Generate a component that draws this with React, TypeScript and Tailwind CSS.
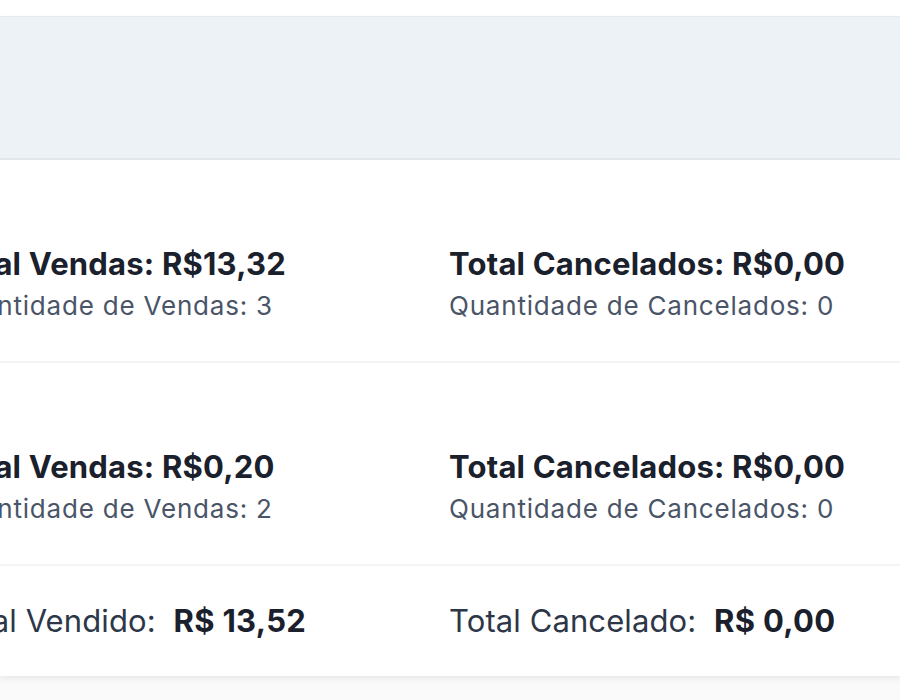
import React from "react";

interface SummaryRow {
    vendas: string;
    qtdVendas: number;
    cancelados: string;
    qtdCancelados: number;
}

const rows: SummaryRow[] = [
    { vendas: "R$13,32", qtdVendas: 3, cancelados: "R$0,00", qtdCancelados: 0 },
    { vendas: "R$0,20", qtdVendas: 2, cancelados: "R$0,00", qtdCancelados: 0 },
];

export default function App() {
    return (
        <div
            className="w-[900px] h-[700px] overflow-hidden bg-[#fafafa] text-[#1a202c]"
            style={{ fontFamily: "Inter, 'Noto Sans', sans-serif" }}
        >
            <div className="h-[16px] bg-white" />
            <div className="bg-white shadow-[0_3px_6px_rgba(0,0,0,0.08)]">
                {/* header band */}
                <div className="h-[144px] bg-[#edf2f7] border-t border-[#e6ebf1] border-b-2 border-b-[#e3e7ec]" />

                {/* period rows */}
                {rows.map((r, i) => (
                    <div key={i} className="h-[203px] pt-[46px] border-b-2 border-[#f3f4f6] flex items-center overflow-hidden">
                        <div className="ml-[-55px] grid grid-cols-[504px_500px] whitespace-nowrap shrink-0">
                            <div>
                                <div className="text-[31px] leading-[38px] font-bold tracking-[0.2px] text-[#1a202c]">Total Vendas: {r.vendas}</div>
                                <div className="text-[26px] leading-[32px] tracking-[0.8px] text-[#4a5568] mt-[7px]">Quantidade de Vendas: {r.qtdVendas}</div>
                            </div>
                            <div>
                                <div className="text-[31px] leading-[38px] font-bold tracking-[0.2px] text-[#1a202c]">Total Cancelados: {r.cancelados}</div>
                                <div className="text-[26px] leading-[32px] tracking-[0.8px] text-[#4a5568] mt-[7px]">Quantidade de Cancelados: {r.qtdCancelados}</div>
                            </div>
                        </div>
                    </div>
                ))}

                {/* totals */}
                <div className="h-[110px] flex items-center overflow-hidden">
                    <div className="ml-[-55px] grid grid-cols-[504px_500px] whitespace-nowrap shrink-0 text-[31px] tracking-[0.1px] text-[#2d3748]">
                        <div>
                            Total Vendido: <span className="font-bold tracking-[0.3px] text-[#1a202c] ml-[9px]">R$ 13,52</span>
                        </div>
                        <div>
                            Total Cancelado: <span className="font-bold tracking-[0.3px] text-[#1a202c] ml-[9px]">R$ 0,00</span>
                        </div>
                    </div>
                </div>
            </div>
        </div>
    );
}
